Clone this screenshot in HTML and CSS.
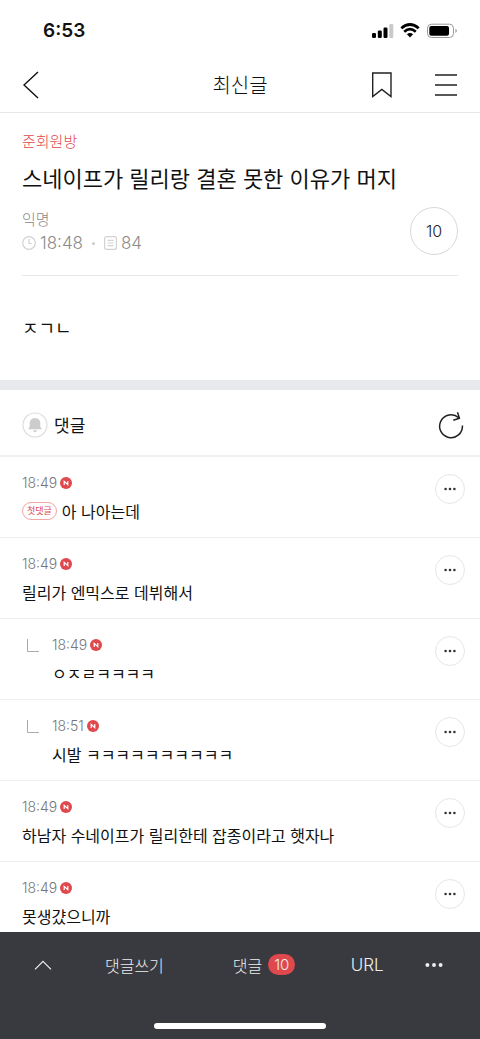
FILE: index.html
```html
<!DOCTYPE html>
<html lang="ko">
<head>
<meta charset="utf-8">
<meta name="viewport" content="width=device-width, initial-scale=1">
<title>최신글</title>
<link rel="stylesheet" href="styles.css">
</head>
<body>
<svg class="defs" aria-hidden="true">
  <symbol id="new" viewBox="0 0 12 12"><circle cx="6" cy="6" r="6" fill="#df484c"/><path d="M4.200 8V4.300L7.800 7.700V4" fill="none" stroke="#fff" stroke-width="1.200"/></symbol>
  <symbol id="dots" viewBox="0 0 12 4"><circle cx="1.6" cy="2" r="1.3"/><circle cx="6" cy="2" r="1.3"/><circle cx="10.4" cy="2" r="1.3"/></symbol>
  <symbol id="reply" viewBox="0 0 14 14"><path d="M1.500 0V12.500H13" fill="none" stroke="#aaa" stroke-width="1"/></symbol>
</svg>
<div class="screen">
  <div class="status">
    <span class="clock">6:53</span>
    <svg width="86" height="16" viewBox="0 0 86 16" aria-hidden="true">
      <rect x="0" y="10" width="4" height="5" rx="1.300"/><rect x="5.800" y="7.500" width="4" height="7.500" rx="1.300"/><rect x="11.500" y="4.500" width="4" height="10.500" rx="1.300"/><rect x="17.300" y="1" width="4" height="14" rx="1.300" fill="#c9c9c9"/>
      <path d="M29.300 5.300Q38 -2.300 46.700 5.300M32.200 8.700Q38 3.600 43.800 8.700" fill="none" stroke="#000" stroke-width="2.700"/><path d="M34.900 11.200Q38 8.900 41.100 11.200L38 14.600Z"/>
      <rect x="55.500" y="1.200" width="26" height="13.300" rx="4" fill="none" stroke="#999"/><rect x="57.300" y="3" width="19.700" height="9.700" rx="2"/><path d="M83.500 5.700Q86 7.800 83.500 10Z" fill="#888"/>
    </svg>
  </div>
  <header class="nav">
    <button class="back" aria-label="뒤로"><svg width="16" height="28" viewBox="0 0 16 28"><path d="M15 1L1 14L15 27" fill="none" stroke="#111" stroke-width="1.400"/></svg></button>
    <h1>최신글</h1>
    <div class="tools">
      <button aria-label="북마크"><svg width="20" height="26" viewBox="0 0 20 26"><path d="M.7 1H19V24.500L9.850 17.500L.7 24.500Z" fill="none" stroke="#222" stroke-width="1.400"/></svg></button>
      <button aria-label="메뉴"><svg width="22" height="22" viewBox="0 0 22 22"><path d="M0 1H22M0 11H22M0 21H22" stroke="#222" stroke-width="1.400"/></svg></button>
    </div>
  </header>
  <main>
    <article class="post">
      <a class="board" href="#">준회원방</a>
      <h2>스네이프가 릴리랑 결혼 못한 이유가 머지</h2>
      <div class="info">
        <div>
          <div class="author">익명</div>
          <div class="meta">
            <svg width="14" height="14" viewBox="0 0 14 14"><circle cx="7" cy="7" r="6.300" fill="none" stroke="#d2d2d2" stroke-width="1.200"/><path d="M7 3V7.500H9.500" fill="none" stroke="#d2d2d2" stroke-width="1.200"/></svg>
            <span>18:48</span>
            <i class="sep"></i>
            <svg width="13" height="14" viewBox="0 0 13 14"><rect x=".6" y=".6" width="11.800" height="12.800" rx="2" fill="none" stroke="#d2d2d2" stroke-width="1.200"/><path d="M3.500 4.300H9.500M3.500 7H9.500M3.500 9.700H9.500" stroke="#d2d2d2" stroke-width="1.200"/></svg>
            <span>84</span>
          </div>
        </div>
        <a class="count" href="#comments">10</a>
      </div>
      <p class="body">ㅈㄱㄴ</p>
    </article>
    <section id="comments">
      <div class="heading">
        <button aria-label="알림"><svg width="26" height="26" viewBox="0 0 26 26"><circle cx="13" cy="13" r="12" fill="none" stroke="#dedede" stroke-width="1.200"/><path d="M6.500 17.300V16.300L7.700 15V10.800Q7.800 6.500 13 6Q18.200 6.500 18.300 10.800V15L19.500 16.300V17.300Z" fill="#ccc"/><path d="M11 18.300H15Q14.500 20.300 13 20.300T11 18.300Z" fill="#ccc"/></svg></button>
        <h3>댓글</h3>
        <button class="refresh" aria-label="새로고침"><svg width="26" height="28" viewBox="0 0 26 28"><path d="M24.400 14.500A11.400 11.400 0 1 1 20.700 6.800M19.500 1.300L21.400 7.300L15.300 9.300" fill="none" stroke="#222" stroke-width="1.500"/></svg></button>
      </div>
      <ul class="list">
        <li><div class="text"><div class="time">18:49<svg><use href="#new"/></svg></div><p><span class="first">첫댓글</span>아 나아는데</p></div><button class="more" aria-label="더보기"><svg><use href="#dots"/></svg></button></li>
        <li><div class="text"><div class="time">18:49<svg><use href="#new"/></svg></div><p>릴리가 엔믹스로 데뷔해서</p></div><button class="more" aria-label="더보기"><svg><use href="#dots"/></svg></button></li>
        <li><svg class="reply"><use href="#reply"/></svg><div class="text"><div class="time">18:49<svg><use href="#new"/></svg></div><p>ㅇㅈㄹㅋㅋㅋㅋ</p></div><button class="more" aria-label="더보기"><svg><use href="#dots"/></svg></button></li>
        <li><svg class="reply"><use href="#reply"/></svg><div class="text"><div class="time">18:51<svg><use href="#new"/></svg></div><p>시발 ㅋㅋㅋㅋㅋㅋㅋㅋㅋㅋ</p></div><button class="more" aria-label="더보기"><svg><use href="#dots"/></svg></button></li>
        <li><div class="text"><div class="time">18:49<svg><use href="#new"/></svg></div><p>하남자 수네이프가 릴리한테 잡종이라고 햇자나</p></div><button class="more" aria-label="더보기"><svg><use href="#dots"/></svg></button></li>
        <li><div class="text"><div class="time">18:49<svg><use href="#new"/></svg></div><p>못생걌으니까</p></div><button class="more" aria-label="더보기"><svg><use href="#dots"/></svg></button></li>
      </ul>
    </section>
  </main>
  <footer>
    <div class="actions">
      <button class="up" aria-label="위로"><svg width="18" height="10" viewBox="0 0 18 10"><path d="M1 9.300L9 1.300L17 9.300" fill="none" stroke="#eee" stroke-width="1.200"/></svg></button>
      <button class="write">댓글쓰기</button>
      <button class="replies">댓글 <span class="badge">10</span></button>
      <button class="url">URL</button>
      <button class="etc" aria-label="더보기"><svg width="18" height="6"><use href="#dots"/></svg></button>
    </div>
    <div class="home"></div>
  </footer>
</div>
</body>
</html>
```
FILE: styles.css
```css
* { box-sizing: border-box; margin: 0; padding: 0; }
body { background: #fff; color: #111; font-family: "Noto Sans CJK KR", sans-serif; }
button { background: none; border: 0; color: inherit; font: inherit; display: flex; align-items: center; justify-content: center; }
a { color: inherit; text-decoration: none; }
svg { display: block; flex: none; }
.defs { display: none; }
.screen { display: flex; flex-direction: column; height: 100vh; }
.status { display: flex; flex: none; align-items: center; justify-content: space-between; height: 58px; padding: 4px 22px 0 43px; }
.clock { font: 600 19px/24px Inter, sans-serif; }
.nav { display: grid; flex: none; grid-template-columns: 1fr auto 1fr; align-items: center; height: 55px; padding: 0 23px 0 23px; border-bottom: 1px solid #e6e6e6; }
.nav .back { justify-self: start; }
.nav h1 { font-size: 20px; line-height: 28px; font-weight: 300; }
.tools { display: flex; align-items: center; justify-self: end; gap: 43px; }
main { flex: 1; min-height: 0; overflow-y: auto; scrollbar-width: none; }
.post { padding: 18px 22px 40px; border-bottom: 10px solid #e8e9ed; }
.board { display: block; color: #df484c; font-size: 15px; line-height: 20px; font-weight: 300; }
.post h2 { margin-top: 10px; font-size: 22px; line-height: 32px; font-weight: 400; }
.info { display: flex; align-items: center; justify-content: space-between; padding: 14px 0 20px; border-bottom: 1px solid #e9e9e9; }
.author { color: #888; font-size: 15px; line-height: 24px; font-weight: 300; }
.meta { display: flex; align-items: center; color: #8b8b8b; font: 300 17px/24px Inter, sans-serif; }
.meta span { margin-left: 4px; }
.sep { width: 3px; height: 3px; margin: 0 9px; border-radius: 50%; background: #ccc; }
.count { display: flex; align-items: center; justify-content: center; width: 48px; height: 48px; border: 1px solid #d8d8d8; border-radius: 50%; color: #222; font: 300 16px/24px Inter, sans-serif; }
.body { margin-top: 38px; font-size: 18px; line-height: 26px; font-weight: 400; }
.heading { display: flex; align-items: center; height: 67px; padding: 4px 16px 0 22px; border-bottom: 2px solid #f2f2f2; }
.heading h3 { margin-left: 6px; font-size: 17px; line-height: 26px; font-weight: 400; }
.refresh { margin-left: auto; }
.list { list-style: none; }
.list li { display: flex; align-items: flex-start; padding: 16px 15px 14px 22px; border-bottom: 1px solid #ededed; }
.time { display: flex; align-items: center; gap: 3px; color: #777; font: 300 14px/20px Inter, sans-serif; }
.time svg { width: 12px; height: 12px; }
.text { flex: 1; min-width: 0; }
.text p { display: flex; align-items: center; margin-top: 6px; font-size: 16px; line-height: 24px; font-weight: 400; }
.first { display: inline-block; margin-right: 5px; padding: 0 4px; border: 1px solid #f0a5a7; border-radius: 9px; color: #df484c; font-size: 9px; line-height: 16px; }
.reply { width: 14px; height: 14px; margin: 4px 12px 0 4px; }
.more { width: 30px; height: 30px; margin-top: 1px; border: 1px solid #e6e6e6; border-radius: 50%; fill: #333; }
.more svg { width: 12px; height: 4px; }
footer { flex: none; height: 107px; background: #393a40; color: #eee; }
.actions { display: grid; grid-template-columns: 18% 20% 34% 9% 19%; height: 65px; font-size: 16px; line-height: 24px; font-weight: 300; }
.replies { gap: 6px; }
.badge { padding: 0 6px; border-radius: 11px; background: #df484c; font: 300 15px/21px Inter, sans-serif; }
.url { font: 300 17px/24px Inter, sans-serif; }
.etc { fill: #eee; }
.home { width: 36%; height: 6px; margin: 26px auto 0; border-radius: 3px; background: #fff; }
```
